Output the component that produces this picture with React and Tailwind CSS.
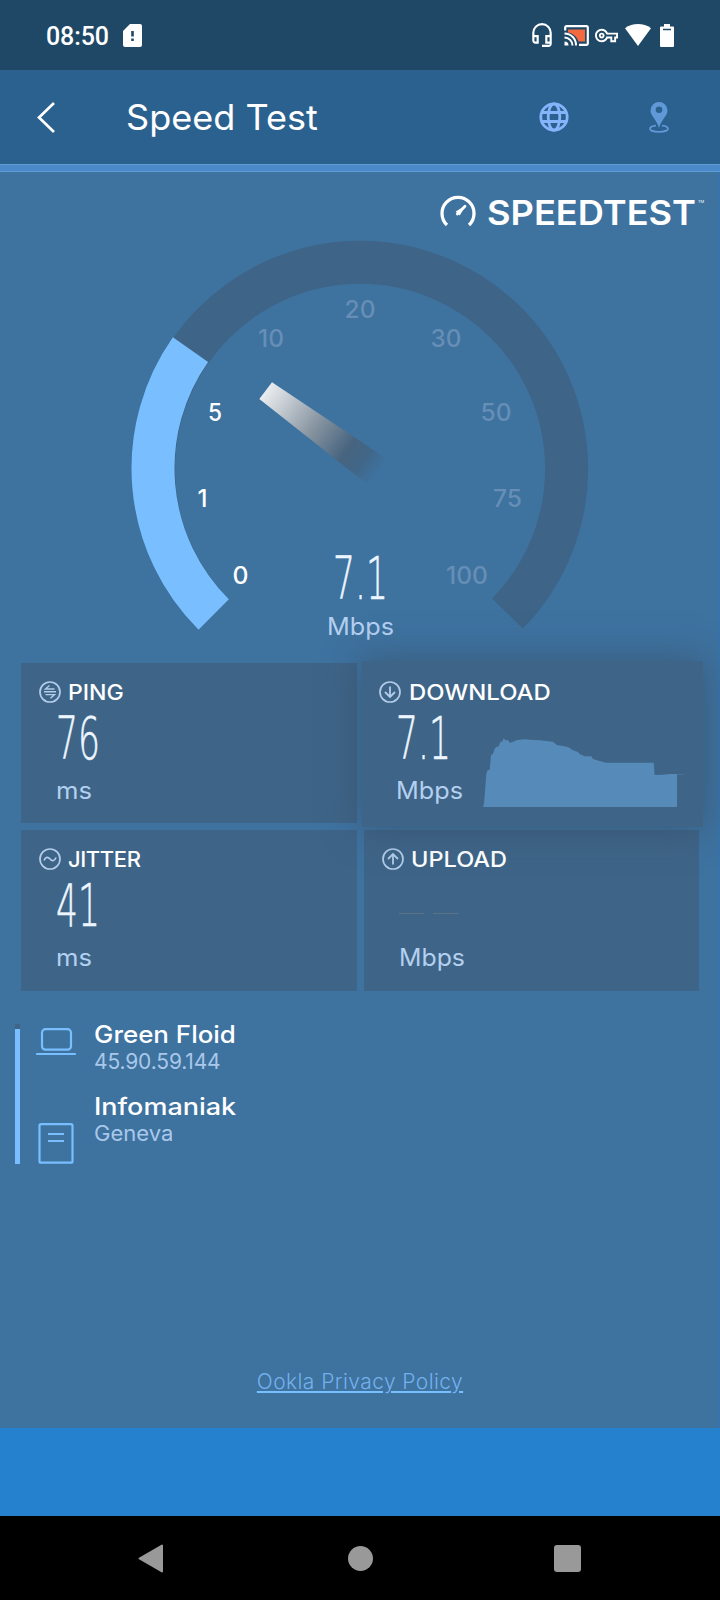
import React from 'react';
import clsx from 'clsx';
import { MdOutlineHeadsetMic, MdOutlineVpnKey } from 'react-icons/md';

const gaugeLabels = [
  { value: '0', x: 240.5, y: 584, width: 16, active: true },
  { value: '1', x: 202.5, y: 507, active: true },
  { value: '5', x: 215, y: 421, width: 14, active: true },
  { value: '10', x: 271, y: 347, width: 26 },
  { value: '20', x: 360, y: 318, width: 31 },
  { value: '30', x: 446, y: 347, width: 31 },
  { value: '50', x: 496, y: 421, width: 31 },
  { value: '75', x: 507.5, y: 507, width: 29 },
  { value: '100', x: 467, y: 584, width: 42 },
];

const StatusBar = () => (
  <div className="h-[70px] bg-[#1f4867] flex items-center justify-between pl-[46px] pr-[46px] text-white">
    <div className="flex items-center">
      <span className="font-['Roboto',sans-serif] font-medium text-[25px] leading-none tracking-[-0.1px] w-[77px] pt-0.5">08:50</span>
      <svg width="19" height="23" viewBox="0 0 19 23" fill="none">
        <path d="M7 0h10a2 2 0 0 1 2 2v19a2 2 0 0 1-2 2H2a2 2 0 0 1-2-2V7z" fill="white" />
        <path d="M9.5 7v5.5M9.5 14.5V17" stroke="#1f4867" strokeWidth="2.6" />
      </svg>
    </div>
    <div className="flex items-center">
      <MdOutlineHeadsetMic size={26} className="mr-[9px]" />
      <svg width="25" height="21" viewBox="0 0 25 21" fill="none">
        <path d="M4 4.5h17v12H14.5C13 12 9 8 4 7.5z" fill="#f5693f" />
        <path d="M1.2 5.5V2.5a1.3 1.3 0 0 1 1.3-1.3h20a1.3 1.3 0 0 1 1.3 1.3v16a1.3 1.3 0 0 1-1.3 1.3H15" stroke="white" strokeWidth="2.2" />
        <path d="M.5 8.5A11.5 11.5 0 0 1 12 20.5M.5 12.5a8 8 0 0 1 8 8" stroke="white" strokeWidth="2" />
        <path d="M.5 16.5v4h4a4 4 0 0 0-4-4z" fill="white" />
      </svg>
      <MdOutlineVpnKey size={23} className="ml-[6px]" />
      <svg width="26" height="22" viewBox="0 0 26 22" className="ml-[7px]">
        <path d="M0 4.2C7.5-1.4 18.5-1.4 26 4.2L13 22z" fill="white" />
      </svg>
      <svg width="14" height="23" viewBox="0 0 14 23" className="ml-[9px]">
        <path d="M4 0h6v2.5h3a1 1 0 0 1 1 1V22a1 1 0 0 1-1 1H1a1 1 0 0 1-1-1V3.5a1 1 0 0 1 1-1h3z" fill="white" />
        <path d="M3 5.5h8" stroke="#1f4867" strokeWidth="1.5" />
      </svg>
    </div>
  </div>
);

const Header = () => (
  <header className="h-[94px] bg-[#2a618f] flex items-center pl-[37px] pr-[51px]">
    <svg width="19" height="31" viewBox="0 0 19 31" fill="none">
      <path d="M17 1L2 15.5 17 30" stroke="white" strokeWidth="2.7" />
    </svg>
    <h1 className="ml-[70px] flex-1 text-white text-[35px] leading-none origin-left scale-x-[1.03]">Speed Test</h1>
    <svg width="30" height="30" viewBox="0 0 30 30" fill="none" stroke="#86b4fb" strokeWidth="2.8">
      <circle cx="15" cy="15" r="13.2" />
      <ellipse cx="15" cy="15" rx="5.8" ry="13.2" />
      <path d="M3 10.5h24M3 19.5h24" />
    </svg>
    <svg width="20" height="31" viewBox="0 0 20 31" className="ml-20">
      <path d="M10 0a8.5 8.5 0 0 1 8.5 8.5C18.5 14 12 18 10 26 8 18 1.5 14 1.5 8.5A8.5 8.5 0 0 1 10 0zm0 4.5a3.3 3.3 0 1 0 0 6.6 3.3 3.3 0 0 0 0-6.6z" fill="#6198d8" fillRule="evenodd" />
      <path d="M7 23.700c-3.400.3-6 1.500-6 3 0 1.700 4 3.100 9 3.100s9-1.400 9-3.100c0-1.500-2.600-2.700-6-3" fill="none" stroke="#6198d8" strokeWidth="1.7" />
    </svg>
  </header>
);

const Logo = () => (
  <div className="h-[68px] pt-5 pl-[440px] flex items-start text-white">
    <svg width="36" height="32" viewBox="0 0 36 32" fill="none" className="mt-[3px] shrink-0">
      <path d="M7 30A16 16 0 1 1 29 30" stroke="white" strokeWidth="3.3" />
      <path d="M25.7 10.4l-6 10.2-4-4z" fill="white" />
      <path d="M17.3 19L25 11.2" stroke="white" strokeWidth="2.8" strokeLinecap="round" />
    </svg>
    <svg width="226" height="40" className="ml-[11px] shrink-0 fill-white">
      <text x="0" y="32.5" textLength="209" lengthAdjust="spacingAndGlyphs" className="text-[34px] font-semibold">SPEEDTEST</text>
      <text x="211" y="10.5" className="text-[4px]">TM</text>
    </svg>
  </div>
);

const Gauge = () => (
  <svg width="720" height="423" viewBox="0 240 720 423" className="block shrink-0">
    <defs>
      <linearGradient id="needle" gradientUnits="userSpaceOnUse" x1="265" y1="390" x2="379" y2="473">
        <stop offset="0" stopColor="#eceef0" />
        <stop offset="0.45" stopColor="#84929f" />
        <stop offset="0.72" stopColor="#47647f" />
        <stop offset="0.86" stopColor="#416585" stopOpacity="0.9" />
        <stop offset="1" stopColor="#40688d" stopOpacity="0" />
      </linearGradient>
    </defs>
    <path d="M213.7 614.5A206.5 206.5 0 1 1 507.5 613.5" fill="none" stroke="#3e6487" strokeWidth="43" />
    <path d="M213.7 614.5A206.5 206.5 0 0 1 190.5 349.6" fill="none" stroke="#79bfff" strokeWidth="43" />
    <path d="M272 382.3L387 459 367 484 259.3 399z" fill="url(#needle)" />
    {gaugeLabels.map((label) => (
      <text
        key={label.value}
        x={label.x}
        y={label.y}
        textAnchor="middle"
        textLength={label.width}
        lengthAdjust="spacingAndGlyphs"
        className={clsx('text-[24px] font-medium', label.active ? 'fill-white' : 'fill-[#668eb6]')}
      >
        {label.value}
      </text>
    ))}
    <text x="333" y="598.5" textLength="55" lengthAdjust="spacingAndGlyphs" className="fill-[#edf6ff] stroke-[#edf6ff] stroke-[0.6px] text-[59px] font-extralight font-['DejaVu_Sans',sans-serif]">7.1</text>
    <text x="327" y="635" textLength="67" lengthAdjust="spacingAndGlyphs" className="fill-[#b3d0f0] text-[24px]">Mbps</text>
  </svg>
);

const CardIcon = ({ type }) => (
  <svg width="22" height="22" viewBox="0 0 22 22" fill="none" stroke="#b3cdea" strokeWidth="1.7">
    <circle cx="11" cy="11" r="10" />
    {type === 'ping' && <path d="M10.5 4.5L6.5 8h9M5 10.8h12M6.5 13.6h9l-4 3.700" strokeWidth="1.4" />}
    {type === 'jitter' && <path d="M5 12.5c1.5-4 4-4 6-1.5s4.5 2.500 6-1.500" />}
    {type === 'download' && <path d="M11 5.5v10.5M6 11l5 5 5-5" strokeWidth="1.8" />}
    {type === 'upload' && <path d="M11 16.5V6M6 11l5-5 5 5" strokeWidth="1.8" />}
  </svg>
);

const ResultCard = ({ type, title, titleClass, value, unit, className, valueWidth, unitWidth, children }) => (
  <div className={clsx('bg-[#3e6487] pt-[17px]', className)}>
    <div className="flex items-center h-6 gap-[7px]">
      <CardIcon type={type} />
      <span className={clsx('text-white text-[22px] leading-6 font-medium origin-left', titleClass)}>{title}</span>
    </div>
    <div className="flex">
      <div className="pl-[17px]">
        <svg width="64" height="65" className="block overflow-visible">
          {value ? (
            <text
              x="0"
              y="55"
              textLength={valueWidth}
              lengthAdjust="spacingAndGlyphs"
              className="fill-[#edf6ff] stroke-[#edf6ff] stroke-[0.6px] text-[59px] font-extralight font-['DejaVu_Sans',sans-serif]"
            >
              {value}
            </text>
          ) : (
            <path d="M0 42.5h25M34 42.5h26" stroke="#5a7386" />
          )}
        </svg>
        <svg width="66" height="38" className="block overflow-visible">
          <text x="0" y="30" textLength={unitWidth} lengthAdjust="spacingAndGlyphs" className="fill-[#b3d0f0] text-[24px]">{unit}</text>
        </svg>
      </div>
      {children}
    </div>
  </div>
);

const DownloadChart = () => (
  <svg width="202" height="71" viewBox="0 0 606 213" className="mt-[33px] ml-[21px]">
    <path
      d="M0 210L3 200 10 110 14 100 20 98 24 55 30 50 35 35 40 30 47 28 52 15 58 13 62 4 68 10 75 9 80 17 90 15 100 10 125 7 150 9 170 10 190 12 210 14 222 24 240 27 255 30 270 40 285 45 290 51 305 58 325 58 330 66 350 72 370 77 512 77 515 114 540 113 560 111 582 111V210z"
      fill="#568ab9"
    />
    <path d="M582 112h22" stroke="#4a749b" strokeWidth="3" />
  </svg>
);

const Results = () => (
  <div className="grid grid-cols-[336px_335px] grid-rows-[160px_161px] gap-[7px] pl-[21px] shrink-0">
    <ResultCard type="ping" title="PING" titleClass="scale-x-[1.05]" value="76" unit="ms" valueWidth={44} unitWidth={36} className="pl-[18px]" />
    <ResultCard
      type="download"
      title="DOWNLOAD"
      titleClass="ml-px scale-x-[1.085]"
      value="7.1"
      unit="Mbps"
      valueWidth={55}
      unitWidth={67}
      className="relative z-10 -ml-0.5 -mr-1 -mt-0.5 -mb-1 pt-[19px] pl-[17px] shadow-[0_0_34px_rgba(54,76,98,0.65)]"
    >
      <DownloadChart />
    </ResultCard>
    <ResultCard type="jitter" title="JITTER" titleClass="tracking-[-0.4px]" value="41" unit="ms" valueWidth={44} unitWidth={36} className="pl-[18px]" />
    <ResultCard type="upload" title="UPLOAD" titleClass="scale-x-[1.07]" unit="Mbps" unitWidth={66} className="pl-[18px]" />
  </div>
);

const ServerInfo = () => (
  <div className="mt-[33px] pl-[15px] flex shrink-0">
    <div className="w-[5px] h-[140px] bg-[#79bfff] border-t-[5px] border-[#3e6487]" />
    <div className="ml-[16px] w-[40px] flex flex-col justify-between pt-1">
      <svg width="40" height="28" viewBox="0 0 40 28" fill="none" stroke="#79bfff" strokeWidth="2.2">
        <rect x="6" y="1.2" width="29" height="20.5" rx="3.5" />
        <path d="M1 26h38" strokeLinecap="round" />
      </svg>
      <svg width="36" height="41" viewBox="0 0 36 41" fill="none" stroke="#79bfff" strokeWidth="2.2" className="ml-[2px]">
        <rect x="1.5" y="1.2" width="33" height="38.5" rx="1.5" />
        <path d="M10 11h16M10 18h16" strokeWidth="2.2" />
      </svg>
    </div>
    <div className="ml-[18px] -mt-[7px]">
      <p className="text-white text-[24px] leading-[36px] font-medium origin-left scale-x-[1.08]">Green Floid</p>
      <p className="text-[#a9c8ea] text-[21px] leading-[18px] tracking-[-0.15px]">45.90.59.144</p>
      <p className="mt-[18px] text-white text-[24px] leading-[36px] font-medium origin-left scale-x-[1.125]">Infomaniak</p>
      <p className="text-[#a9c8ea] text-[21px] leading-[18px] origin-left scale-x-[1.05]">Geneva</p>
    </div>
  </div>
);

const NavigationBar = () => (
  <nav className="h-[84px] bg-black flex items-center justify-between pl-[138px] pr-[139px]">
    <svg width="25" height="29" viewBox="0 0 25 29">
      <path d="M24 1.5v26L1.5 14.5z" fill="#999" stroke="#999" strokeWidth="2" strokeLinejoin="round" />
    </svg>
    <div className="w-[25px] h-[25px] rounded-full bg-[#999] ml-[3px]" />
    <div className="w-[27px] h-[27px] rounded-[3px] bg-[#999]" />
  </nav>
);

const App = () => (
  <div className="w-[720px] h-[1600px] flex flex-col overflow-hidden font-['Inter',sans-serif] bg-[#3e729f]">
    <StatusBar />
    <Header />
    <div className="h-2 bg-[#4a8acb] border-y border-[#609bd5]" />

    <main className="h-[1256px] flex flex-col bg-[#3e729f] border-r-2 border-[#3674ab]">
      <Logo />
      <Gauge />
      <Results />
      <ServerInfo />
      <div className="mt-auto mb-[30px] pl-0.5 text-center">
        <a href="#privacy" className="text-[21px] leading-8 font-light tracking-[0.42px] text-[#74b0ed] underline decoration-[#79bfff] decoration-2 underline-offset-[2px]">
          Ookla Privacy Policy
        </a>
      </div>
    </main>

    <div className="h-[88px] bg-[#2580ce]" />
    <NavigationBar />
  </div>
);

export default App;
